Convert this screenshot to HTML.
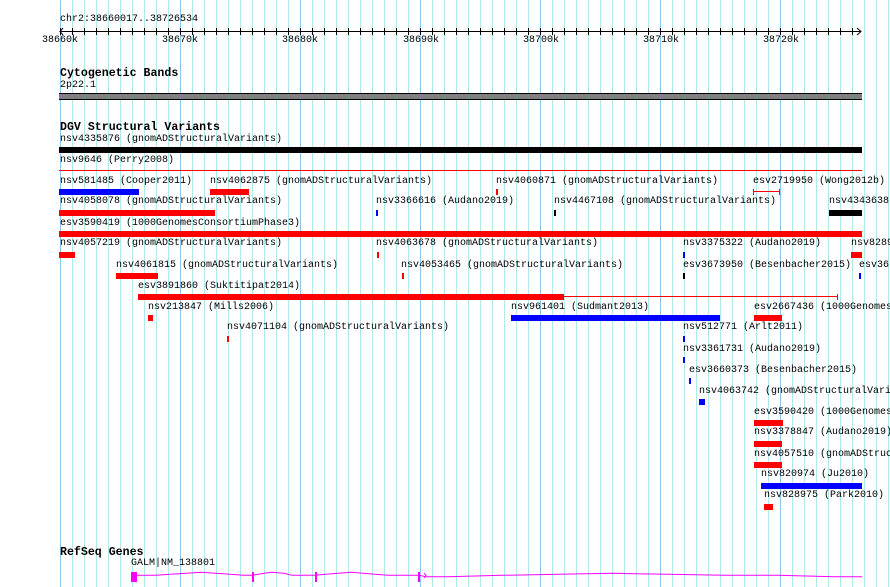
<!DOCTYPE html>
<html><head><meta charset="utf-8"><style>
html,body{margin:0;padding:0;}
body{width:890px;height:587px;overflow:hidden;background:#fff;position:relative;font-family:"Liberation Mono","DejaVu Sans Mono",monospace;}
#grid{position:absolute;left:60px;top:0;width:830px;height:587px;
background-image:repeating-linear-gradient(90deg,#8cc6e8 0,#8cc6e8 1px,transparent 1px,transparent 120px),repeating-linear-gradient(90deg,#b0e8ee 0,#b0e8ee 1px,transparent 1px,transparent 12px);}
.t{position:absolute;font-size:10px;line-height:12px;color:#000;white-space:nowrap;}
.h{position:absolute;font-size:11.6px;line-height:12px;font-weight:bold;color:#000;white-space:nowrap;}
.b{position:absolute;}
.r{background:#f00;}.u{background:#00f;}.k{background:#000;}
</style></head><body>
<div id="grid"></div>
<svg style="position:absolute;left:0;top:0" width="890" height="60">
<line x1="60" y1="31.5" x2="861" y2="31.5" stroke="#000"/>
<polyline points="63,28 60,31.5 63,35" fill="none" stroke="#000"/>
<polyline points="857,28 861,31.5 857,35" fill="none" stroke="#000"/>
<g stroke="#000" id="ticks"></g>
</svg>
<script>
(function(){var g=document.getElementById('ticks'),s='';for(var x=60.5;x<860;x+=12){s+='<line x1="'+x+'" y1="28" x2="'+x+'" y2="35"/>';}g.innerHTML=s;})();
</script>
<div class="t" style="left:60px;top:14px">chr2:38660017..38726534</div>
<div class="t" style="left:42px;top:35px">38660k</div>
<div class="t" style="left:162px;top:35px">38670k</div>
<div class="t" style="left:282px;top:35px">38680k</div>
<div class="t" style="left:403px;top:35px">38690k</div>
<div class="t" style="left:523px;top:35px">38700k</div>
<div class="t" style="left:643px;top:35px">38710k</div>
<div class="t" style="left:763px;top:35px">38720k</div>

<div class="h" style="left:60px;top:68px">Cytogenetic Bands</div>
<div class="t" style="left:60px;top:80px">2p22.1</div>
<div class="b" style="left:59px;top:93px;width:803px;height:5px;background:#808080;border-top:1px solid #000;border-bottom:1px solid #000"></div>

<div class="h" style="left:60px;top:122px">DGV Structural Variants</div>
<div class="t" style="left:60px;top:134px">nsv4335876 (gnomADStructuralVariants)</div>
<div class="b k" style="left:59px;top:147px;width:803px;height:6px"></div>
<div class="t" style="left:60px;top:155px">nsv9646 (Perry2008)</div>
<div class="b r" style="left:59px;top:170px;width:803px;height:1px"></div>

<div class="t" style="left:60px;top:176px">nsv581485 (Cooper2011)</div>
<div class="b u" style="left:59px;top:189px;width:80px;height:6px"></div>
<div class="t" style="left:210px;top:176px">nsv4062875 (gnomADStructuralVariants)</div>
<div class="b r" style="left:210px;top:189px;width:39px;height:6px"></div>
<div class="t" style="left:496px;top:176px">nsv4060871 (gnomADStructuralVariants)</div>
<div class="b r" style="left:496px;top:189px;width:2px;height:6px"></div>
<div class="t" style="left:753px;top:176px">esv2719950 (Wong2012b)</div>
<div class="b r" style="left:753px;top:191px;width:27px;height:1px"></div>
<div class="b r" style="left:753px;top:189px;width:1px;height:6px"></div>
<div class="b r" style="left:779px;top:189px;width:1px;height:6px"></div>

<div class="t" style="left:60px;top:196px">nsv4058078 (gnomADStructuralVariants)</div>
<div class="b r" style="left:59px;top:210px;width:156px;height:6px"></div>
<div class="t" style="left:376px;top:196px">nsv3366616 (Audano2019)</div>
<div class="b u" style="left:376px;top:210px;width:2px;height:6px"></div>
<div class="t" style="left:554px;top:196px">nsv4467108 (gnomADStructuralVariants)</div>
<div class="b k" style="left:554px;top:210px;width:2px;height:6px"></div>
<div class="t" style="left:829px;top:196px">nsv4343638</div>
<div class="b k" style="left:829px;top:210px;width:33px;height:6px"></div>

<div class="t" style="left:60px;top:218px">esv3590419 (1000GenomesConsortiumPhase3)</div>
<div class="b r" style="left:59px;top:231px;width:803px;height:6px"></div>

<div class="t" style="left:60px;top:238px">nsv4057219 (gnomADStructuralVariants)</div>
<div class="b r" style="left:59px;top:252px;width:16px;height:6px"></div>
<div class="t" style="left:376px;top:238px">nsv4063678 (gnomADStructuralVariants)</div>
<div class="b r" style="left:377px;top:252px;width:2px;height:6px"></div>
<div class="t" style="left:683px;top:238px">nsv3375322 (Audano2019)</div>
<div class="b u" style="left:683px;top:252px;width:2px;height:6px"></div>
<div class="t" style="left:851px;top:238px">nsv8289</div>
<div class="b r" style="left:851px;top:252px;width:11px;height:6px"></div>

<div class="t" style="left:116px;top:260px">nsv4061815 (gnomADStructuralVariants)</div>
<div class="b r" style="left:116px;top:273px;width:42px;height:6px"></div>
<div class="t" style="left:401px;top:260px">nsv4053465 (gnomADStructuralVariants)</div>
<div class="b r" style="left:402px;top:273px;width:2px;height:6px"></div>
<div class="t" style="left:683px;top:260px">esv3673950 (Besenbacher2015)</div>
<div class="b k" style="left:683px;top:273px;width:2px;height:6px"></div>
<div class="t" style="left:859px;top:260px">esv36</div>
<div class="b u" style="left:859px;top:273px;width:2px;height:6px"></div>

<div class="t" style="left:138px;top:281px">esv3891860 (Suktitipat2014)</div>
<div class="b r" style="left:138px;top:294px;width:426px;height:6px"></div>
<div class="b r" style="left:564px;top:296px;width:274px;height:1px"></div>
<div class="b r" style="left:837px;top:294px;width:1px;height:6px"></div>

<div class="t" style="left:148px;top:302px">nsv213847 (Mills2006)</div>
<div class="b r" style="left:148px;top:315px;width:5px;height:6px"></div>
<div class="t" style="left:511px;top:302px">nsv961401 (Sudmant2013)</div>
<div class="b u" style="left:511px;top:315px;width:209px;height:6px"></div>
<div class="t" style="left:754px;top:302px">esv2667436 (1000Genomes</div>
<div class="b r" style="left:754px;top:315px;width:28px;height:6px"></div>

<div class="t" style="left:227px;top:322px">nsv4071104 (gnomADStructuralVariants)</div>
<div class="b r" style="left:227px;top:336px;width:2px;height:6px"></div>
<div class="t" style="left:683px;top:322px">nsv512771 (Arlt2011)</div>
<div class="b u" style="left:683px;top:336px;width:2px;height:6px"></div>

<div class="t" style="left:683px;top:344px">nsv3361731 (Audano2019)</div>
<div class="b u" style="left:683px;top:357px;width:2px;height:6px"></div>
<div class="t" style="left:689px;top:365px">esv3660373 (Besenbacher2015)</div>
<div class="b u" style="left:689px;top:378px;width:2px;height:6px"></div>
<div class="t" style="left:699px;top:386px">nsv4063742 (gnomADStructuralVari</div>
<div class="b u" style="left:699px;top:399px;width:6px;height:6px"></div>
<div class="t" style="left:754px;top:407px">esv3590420 (1000Genomes</div>
<div class="b r" style="left:754px;top:420px;width:29px;height:6px"></div>
<div class="t" style="left:754px;top:427px">nsv3378847 (Audano2019)</div>
<div class="b r" style="left:754px;top:441px;width:28px;height:6px"></div>
<div class="t" style="left:754px;top:449px">nsv4057510 (gnomADStruc</div>
<div class="b r" style="left:754px;top:462px;width:28px;height:6px"></div>
<div class="t" style="left:761px;top:469px">nsv820974 (Ju2010)</div>
<div class="b u" style="left:761px;top:483px;width:101px;height:6px"></div>
<div class="t" style="left:764px;top:490px">nsv828975 (Park2010)</div>
<div class="b r" style="left:764px;top:504px;width:9px;height:6px"></div>

<div class="h" style="left:60px;top:547px">RefSeq Genes</div>
<div class="t" style="left:131px;top:558px">GALM|NM_138801</div>
<svg style="position:absolute;left:0;top:560px" width="890" height="27">
<g stroke="#f0f" fill="none">
<polyline points="137,15.3 156,15.3 170,14.3 187,13.3 201,12.3 216,13.3 230,14.3 244,15.3 252,15.3 264,13.3 272,12.3 284,13.3 292,15.3 315,15.3 326,14.3 338,13.3 352,12.3 363,13.3 375,14.3 389,15.3 419,15.3 426,16.7 448,16.7 502,15.3 559,14.3 613,13.3 667,14.3 724,15.3 778,15.3 834,16.7 862,16.7"/>
<line x1="253" y1="12" x2="253" y2="22" stroke-width="2"/>
<line x1="316" y1="12" x2="316" y2="22" stroke-width="2"/>
<line x1="419" y1="12" x2="419" y2="22" stroke-width="2"/>
<polyline points="424,13 426,15.5 424,18"/>
</g>
<rect x="131" y="12" width="6" height="10" fill="#f0f"/>
</svg>
</body></html>
